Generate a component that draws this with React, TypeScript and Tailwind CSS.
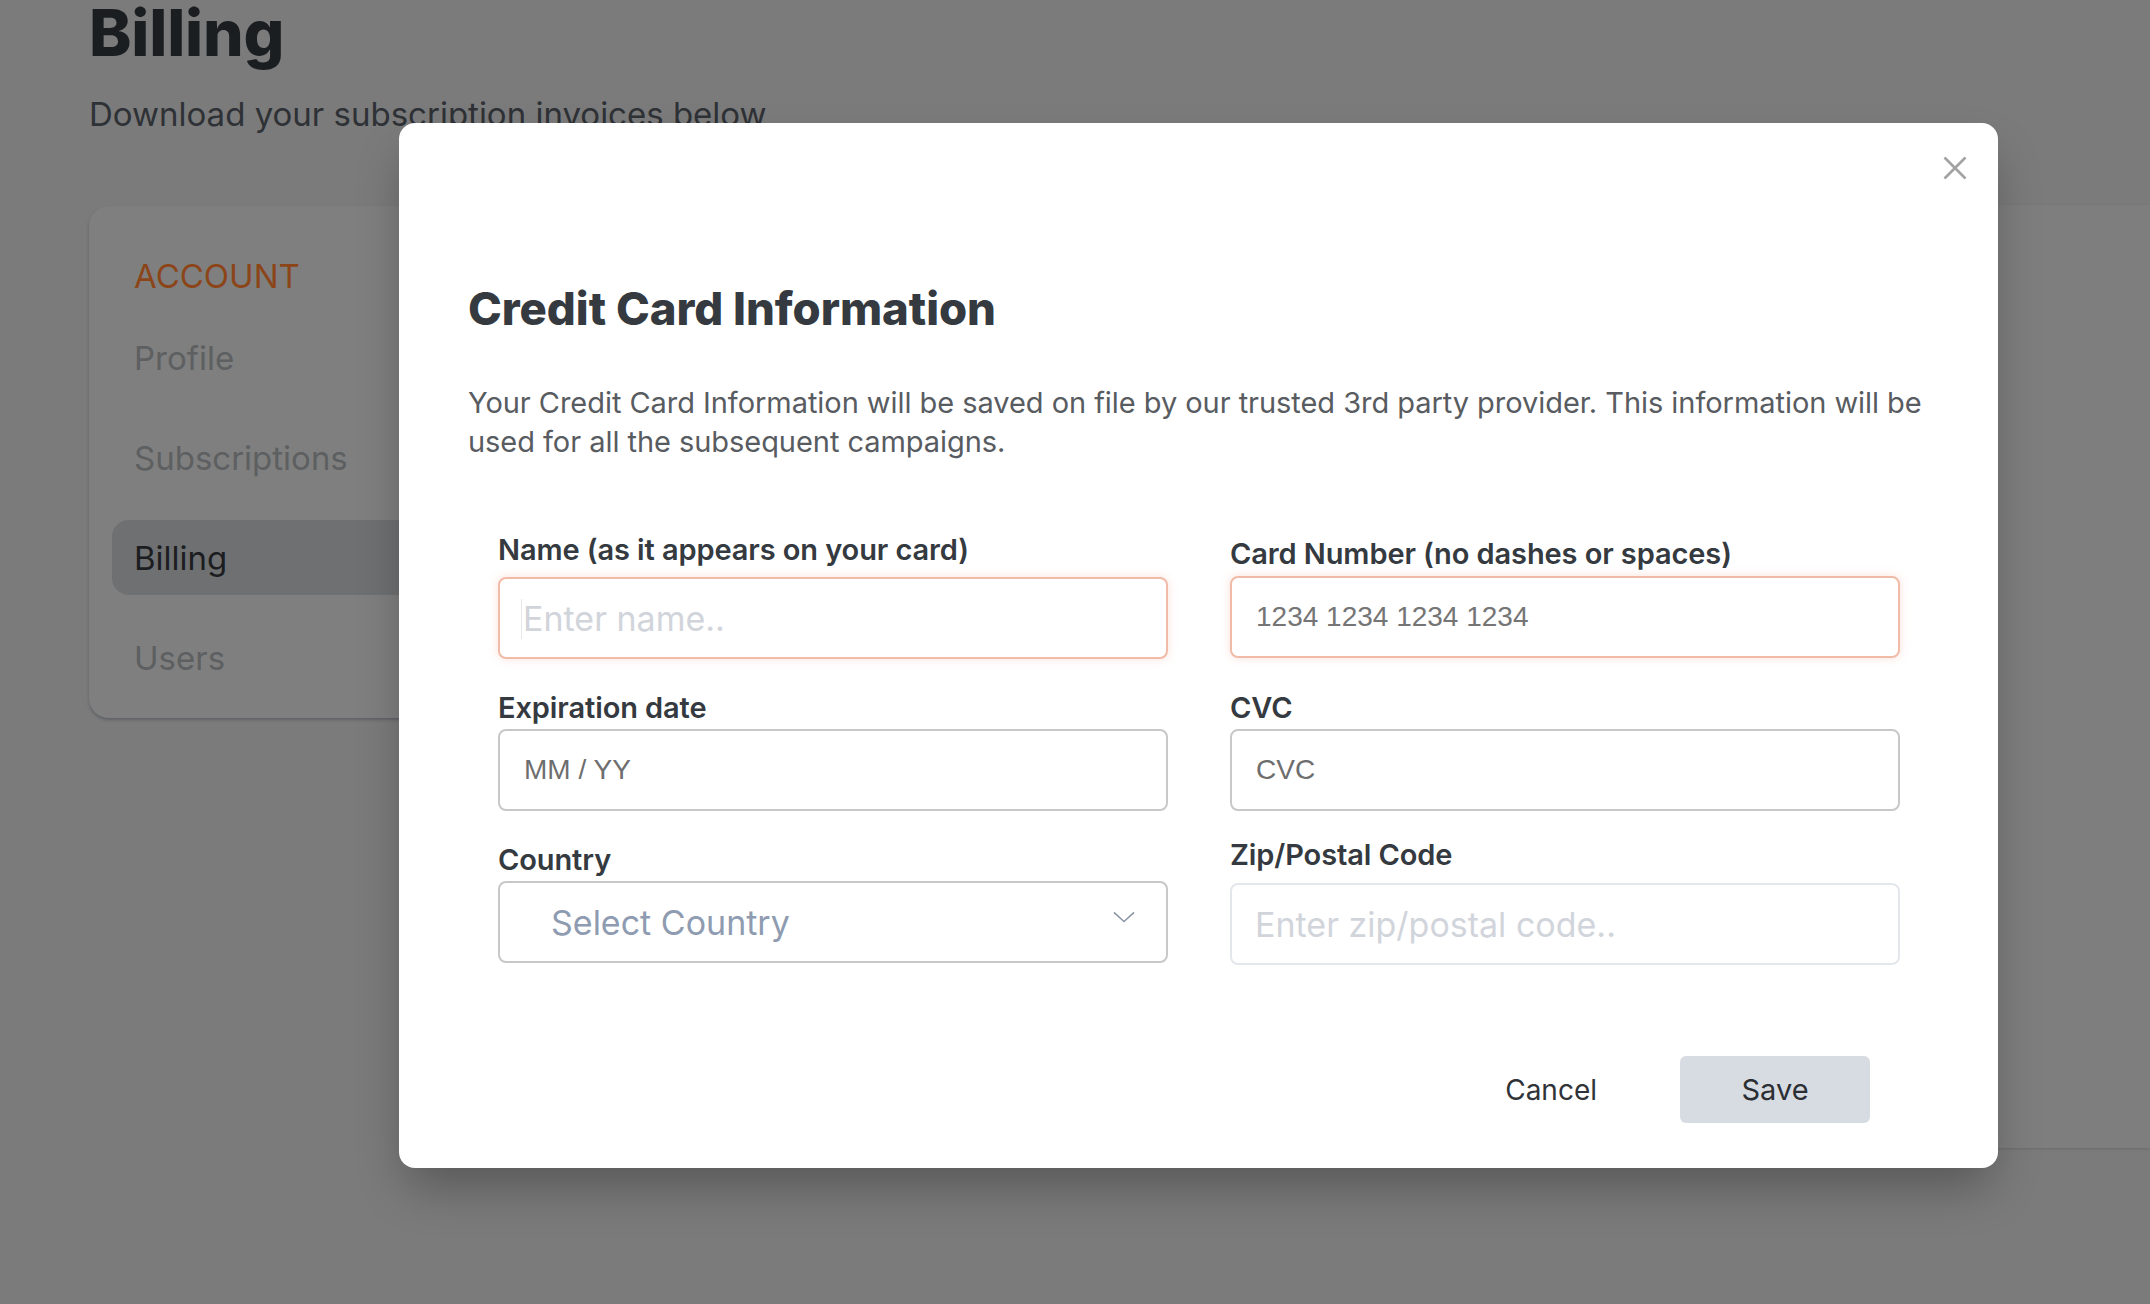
import React from "react";

function Field({
  label,
  labelClass,
  children,
}: {
  label: string;
  labelClass: string;
  children: React.ReactNode;
}) {
  return (
    <div className="flex flex-col">
      <label className={labelClass}>{label}</label>
      {children}
    </div>
  );
}

export default function App() {
  const labelCls =
    "text-[29px] leading-[34px] font-semibold text-[#343a40] tracking-[-0.1px]";
  return (
    <div className="relative w-[2150px] h-[1304px] overflow-hidden bg-[#7b7b7b] font-['Inter',sans-serif]">
      {/* Page behind the dialog */}
      <div className="pl-[89px] pt-[2px]">
        <h1 className="text-[64px] leading-[62px] font-extrabold text-[#1b1e21] tracking-[-0.2px]">
          Billing
        </h1>
        <p className="mt-[30px] text-[33px] leading-[40px] text-[#2e3135]">
          Download your subscription invoices below
        </p>
        <div className="mt-[72px] flex items-start">
          <div className="w-[400px] h-[512px] rounded-[20px] bg-[#7f7f7f] shadow-[0_2px_3px_rgba(40,50,70,0.35)] pt-[50px] pb-[23px]">
            <div className="pl-[45px] text-[33px] leading-[40px] text-[#8b4519]">
              ACCOUNT
            </div>
            <div className="mt-[24px] flex flex-col gap-[25px] pl-[23px]">
              <div className="h-[75px] flex items-center pl-[22px] text-[33px] leading-[40px] text-[#5d5f61]">
                Profile
              </div>
              <div className="h-[75px] flex items-center pl-[22px] text-[33px] leading-[40px] text-[#5d5f61]">
                Subscriptions
              </div>
              <div className="h-[75px] flex items-center pl-[22px] text-[33px] leading-[40px] text-[#1b1d20] bg-[#6f7072] rounded-l-[17px]">
                Billing
              </div>
              <div className="h-[75px] flex items-center pl-[22px] text-[33px] leading-[40px] text-[#5d5f61]">
                Users
              </div>
            </div>
          </div>
          <div className="ml-[30px] flex-1 h-[943px] -mt-[1px] bg-[#7e7e7e] rounded-tl-[20px] shadow-[0_1px_3px_rgba(0,0,0,0.12)]" />
        </div>
      </div>

      {/* Dialog */}
      <div className="absolute left-[399px] top-[123px] w-[1599px] h-[1045px] bg-white rounded-[16px] shadow-[0_25px_50px_-8px_rgba(0,0,0,0.3)]">
        <button className="absolute right-[31px] top-[33px] w-[24px] h-[24px]">
          <svg viewBox="0 0 24 24" className="w-[24px] h-[24px]">
            <path
              d="M1.5 1.5 L22.5 22.5 M22.5 1.5 L1.5 22.5"
              stroke="#a2a2a2"
              strokeWidth="2.6"
              fill="none"
            />
          </svg>
        </button>

        <div className="pt-[160px] pl-[69px]">
          <h2 className="text-[45.5px] leading-[52px] font-extrabold text-[#343a40] tracking-[-0.05px]">
            Credit Card Information
          </h2>
          <p className="mt-[48px] w-[1480px] text-[29px] leading-[39px] text-[#585c61] tracking-[-0.05px]">
            Your Credit Card Information will be saved on file by our trusted
            3rd party provider. This information will be used for all the
            subsequent campaigns.
          </p>

          <div className="ml-[30px] mt-[72px] w-[1402px]">
            <div className="grid grid-cols-2 gap-x-[62px]">
              {/* Left column */}
              <div className="flex flex-col">
                <Field label="Name (as it appears on your card)" labelClass={labelCls}>
                  <div className="relative mt-[10px] h-[82px] rounded-[8px] border-2 border-[#f2bba8] shadow-[0_0_10px_rgba(240,140,110,0.25)] bg-white">
                    <span className="absolute left-[21px] top-[20px] w-[1px] h-[40px] bg-[#e5e7eb]" />
                    <input
                      readOnly
                      placeholder="Enter name.."
                      className="w-full h-full bg-transparent outline-none pl-[23px] text-[34px] font-['Inter',sans-serif] placeholder:text-[#d1d5db]"
                    />
                  </div>
                </Field>
                <div className="mt-[32px]">
                  <Field label="Expiration date" labelClass={labelCls}>
                    <div className="mt-[4px] h-[82px] rounded-[8px] border-2 border-[#c8c8c8] bg-white flex items-center pl-[24px] text-[28px] text-[#6e6e6e] font-['Liberation_Sans',Arial,sans-serif]">
                      MM / YY
                    </div>
                  </Field>
                </div>
                <div className="mt-[32px]">
                  <Field label="Country" labelClass={labelCls}>
                    <div className="relative mt-[4px] h-[82px] rounded-[8px] border-2 border-[#c8c8c8] bg-white flex items-center pl-[51px] text-[34px] text-[#8e9bb0]">
                      Select Country
                      <svg
                        viewBox="0 0 24 12"
                        className="absolute right-[31px] top-[28px] w-[22px] h-[12px]"
                      >
                        <path
                          d="M1 1 L12 11 L23 1"
                          stroke="#8c95a4"
                          strokeWidth="1.6"
                          fill="none"
                        />
                      </svg>
                    </div>
                  </Field>
                </div>
              </div>

              {/* Right column */}
              <div className="flex flex-col pt-[4px]">
                <Field label="Card Number (no dashes or spaces)" labelClass={labelCls}>
                  <div className="mt-[5px] h-[82px] rounded-[8px] border-2 border-[#f2bba8] shadow-[0_0_10px_rgba(240,140,110,0.25)] bg-white flex items-center pl-[24px] text-[28px] text-[#757575] font-['Liberation_Sans',Arial,sans-serif]">
                    1234 1234 1234 1234
                  </div>
                </Field>
                <div className="mt-[33px]">
                  <Field label="CVC" labelClass={labelCls}>
                    <div className="mt-[4px] h-[82px] rounded-[8px] border-2 border-[#c8c8c8] bg-white flex items-center pl-[24px] text-[28px] text-[#6e6e6e] font-['Liberation_Sans',Arial,sans-serif]">
                      CVC
                    </div>
                  </Field>
                </div>
                <div className="mt-[27px]">
                  <Field label="Zip/Postal Code" labelClass={labelCls}>
                    <input
                      readOnly
                      placeholder="Enter zip/postal code.."
                      className="mt-[11px] h-[82px] rounded-[8px] border-2 border-[#e3e7ec] bg-white outline-none pl-[23px] text-[34px] font-['Inter',sans-serif] placeholder:text-[#d1d5db]"
                    />
                  </Field>
                </div>
              </div>
            </div>

            <div className="mt-[91px] flex justify-end items-center pr-[30px] gap-[83px]">
              <button className="text-[28px] text-[#2f3338]">Cancel</button>
              <button className="w-[190px] h-[67px] rounded-[6px] bg-[#d7dce2] text-[29px] text-[#2b2f33]">
                Save
              </button>
            </div>
          </div>
        </div>
      </div>
    </div>
  );
}
